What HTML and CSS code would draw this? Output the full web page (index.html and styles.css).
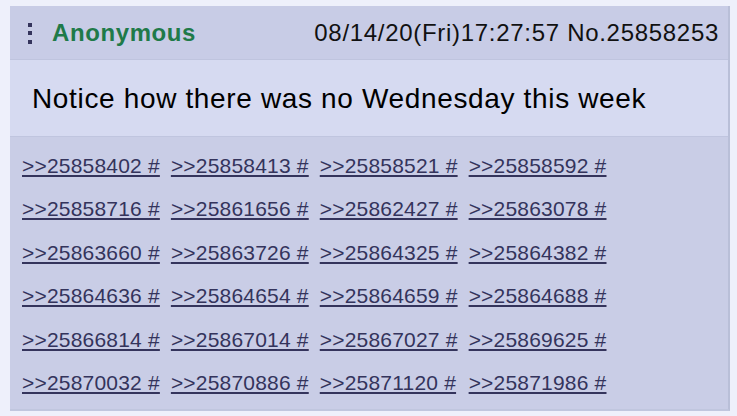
FILE: index.html
```html
<!DOCTYPE html>
<html>
<head>
<meta charset="utf-8">
<link rel="stylesheet" href="styles.css">
</head>
<body>
<div class="post">
  <div class="post-head">
    <div class="menu"><span></span><span></span><span></span></div>
    <span class="name">Anonymous</span>
    <span class="meta">08/14/20(Fri)17:27:57 No.25858253</span>
  </div>
  <div class="post-body">Notice how there was no Wednesday this week</div>
  <div class="backlinks">
    <a href="#">&gt;&gt;25858402 #</a><a href="#">&gt;&gt;25858413 #</a><a href="#">&gt;&gt;25858521 #</a><a href="#">&gt;&gt;25858592 #</a>
    <a href="#">&gt;&gt;25858716 #</a><a href="#">&gt;&gt;25861656 #</a><a href="#">&gt;&gt;25862427 #</a><a href="#">&gt;&gt;25863078 #</a>
    <a href="#">&gt;&gt;25863660 #</a><a href="#">&gt;&gt;25863726 #</a><a href="#">&gt;&gt;25864325 #</a><a href="#">&gt;&gt;25864382 #</a>
    <a href="#">&gt;&gt;25864636 #</a><a href="#">&gt;&gt;25864654 #</a><a href="#">&gt;&gt;25864659 #</a><a href="#">&gt;&gt;25864688 #</a>
    <a href="#">&gt;&gt;25866814 #</a><a href="#">&gt;&gt;25867014 #</a><a href="#">&gt;&gt;25867027 #</a><a href="#">&gt;&gt;25869625 #</a>
    <a href="#">&gt;&gt;25870032 #</a><a href="#">&gt;&gt;25870886 #</a><a href="#">&gt;&gt;25871120 #</a><a href="#">&gt;&gt;25871986 #</a>
  </div>
</div>
</body>
</html>
```
FILE: styles.css
```css
html, body {
  margin: 0;
  padding: 0;
  background: #eef0fb;
  font-family: "Liberation Sans", Arial, Helvetica, sans-serif;
}

.post {
  margin: 6px 0 0 10px;
  width: 718px;
  height: 403px;
  border-right: 2px solid #b9bfd8;
  border-bottom: 2px solid #c0c6de;
  background: #c9cde6;
  display: flex;
  flex-direction: column;
}

.post-head {
  height: 53px;
  border-bottom: 1px solid #bfc4de;
  display: flex;
  align-items: center;
  padding: 0 9px 0 18px;
  background: #c8cce6;
}

.menu {
  display: flex;
  flex-direction: column;
  gap: 4.5px;
  width: 4px;
  margin-top: 1px;
}

.menu span {
  display: block;
  width: 4px;
  height: 4px;
  background: #34345c;
}

.name {
  margin-left: 20px;
  color: #1f7a49;
  font-weight: bold;
  font-size: 24px;
  letter-spacing: 0.6px;
}

.meta {
  margin-left: auto;
  color: #111;
  font-size: 24px;
  letter-spacing: 0.7px;
}

.post-body {
  height: 77px;
  box-sizing: border-box;
  background: #d6daf1;
  border-bottom: 1px solid #c0c5df;
  display: flex;
  align-items: center;
  padding: 2px 0 0 22px;
  color: #000;
  font-size: 28px;
  letter-spacing: 0.65px;
}

.backlinks {
  flex: 1;
  padding: 7px 0 0 12px;
  display: grid;
  grid-template-columns: repeat(4, max-content);
  column-gap: 11px;
  grid-auto-rows: 43.4px;
  align-content: start;
}

.backlinks a {
  color: #34345c;
  font-size: 21px;
  letter-spacing: 0.2px;
  line-height: 43.4px;
  text-decoration: underline;
  text-decoration-thickness: 1.5px;
  text-underline-offset: 2px;
}
```
